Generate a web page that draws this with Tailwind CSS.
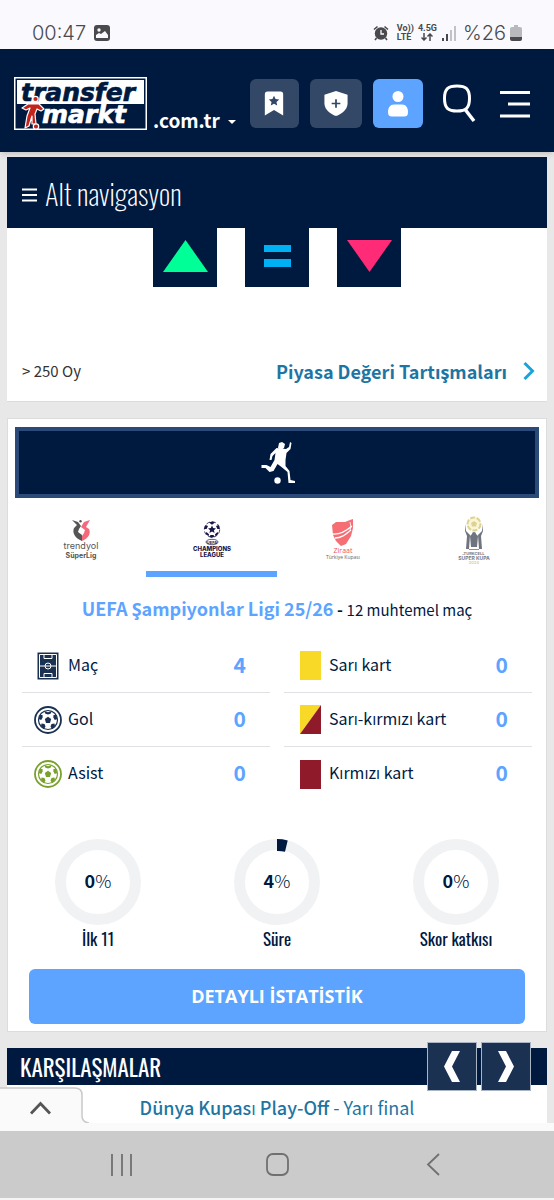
<!DOCTYPE html>
<html lang="tr">

<head>
  <meta charset="UTF-8" />
  <meta name="viewport" content="width=device-width, initial-scale=1.0" />
  <title>Transfermarkt</title>
  <script src="https://cdn.jsdelivr.net/npm/@tailwindcss/browser@4"></script>
</head>

<body class="bg-[#e8e8e8] min-h-screen flex flex-col text-[#00193f] font-['Noto_Sans_CJK_SC','Open_Sans',sans-serif]">

  <!-- Phone status bar -->
  <div class="bg-[#f9f9fe] h-[49px] pl-8 pr-8 pt-4 flex items-center justify-between text-[#4a4a4c] font-['Roboto',sans-serif]">
    <div class="flex items-center gap-2">
      <span class="text-xl leading-6 font-['Inter',sans-serif] font-light">00:47</span>
      <svg class="w-4 h-4" viewBox="0 0 16 16">
        <rect width="16" height="16" rx="3" fill="#4a4a4c" />
        <circle cx="5" cy="5" r="1.7" fill="#f9f9fe" />
        <path d="M2 13v-3l3-2 2 1 4-3 3 4v3z" fill="#f9f9fe" />
      </svg>
    </div>
    <div class="flex items-center">
      <svg class="w-4 h-4 mr-2" viewBox="0 0 16 16" fill="none" stroke="#4a4a4c">
        <circle cx="8" cy="8.500" r="6.200" fill="#4a4a4c" stroke="none" />
        <path d="M1 4.500L4.500 1.500M15 4.500L11.500 1.500M3.500 13L2 15M12.500 13L14 15" stroke-width="1.600" />
        <path d="M8 5v4h3" stroke="#f9f9fe" stroke-width="1.300" />
      </svg>
      <span class="text-[9px] leading-[9px] font-bold mr-1">Vo))<br>LTE</span>
      <span class="text-[9px] leading-[9px] font-bold mr-1 flex flex-col items-center">4.5G
        <svg class="w-3 h-2" viewBox="0 0 12 8" fill="none" stroke="#4a4a4c" stroke-width="1.500">
          <path d="M3 0v7M.5 4.500L3 7l2.500-2.500M9 8V1M6.500 3.500L9 1l2.500 2.500" />
        </svg>
      </span>
      <svg class="w-4 h-4 mr-1.5" viewBox="0 0 16 16">
        <path d="M1 13h2v3H1zM5 9h2v7H5z" fill="#4a4a4c" />
        <path d="M9 5h2v11H9zM13 1h2v15h-2z" fill="#c2c2c5" />
      </svg>
      <span class="text-xl leading-6 font-['Inter',sans-serif] font-light">%26</span>
      <svg class="w-3 h-4 ml-1" viewBox="0 0 12 16">
        <path d="M4 0h4v2h2a2 2 0 0 1 2 2v8H0V4a2 2 0 0 1 2-2h2z" fill="#b9b9bd" />
        <path d="M0 12h12v2a2 2 0 0 1-2 2H2a2 2 0 0 1-2-2z" fill="#4a4a4c" />
      </svg>
    </div>
  </div>

  <!-- Header -->
  <header class="relative bg-[#00193f] h-[103px] pl-3.5 pr-6 pt-1.5 flex items-center shadow-md">
    <a href="/" aria-label="transfermarkt" class="shrink-0">
      <svg class="w-[133px] h-[53px]" viewBox="0 0 133 53">
        <rect width="133" height="53" fill="#fff" />
        <rect x="1.500" y="1.500" width="130" height="50" fill="#00193f" />
        <rect x="3" y="3" width="127" height="24" fill="#fff" />
        <g font-family="DejaVu Sans" font-weight="bold" font-style="italic" font-size="25" stroke-width=".7">
          <text x="7" y="24" fill="#00193f" stroke="#00193f">transfer</text>
          <text x="28" y="46" fill="#fff" stroke="#fff">markt</text>
        </g>
        <g fill="#c4231c" stroke="#fff" stroke-width="1.200" stroke-linejoin="round">
          <path d="M8 31l6-4h11l5 5-3 2-4-2-2 5 1 10h-4l0-8-3 10-4 2 2-12 3-8-4 2z" />
          <circle cx="21.500" cy="22" r="2.700" />
          <circle cx="22" cy="49.500" r="2.700" />
        </g>
      </svg>
    </a>
    <button type="button" class="flex items-center gap-2 ml-1.5 mt-8 text-white font-bold text-[19px] leading-6">.com.tr
      <svg class="w-2 h-1 mt-1" viewBox="0 0 8 4"><path d="M0 0h8L4 4z" fill="#fff" /></svg>
    </button>
    <div class="flex items-center gap-[11px] ml-3.5">
      <button type="button" aria-label="Takip listesi" class="w-[49px] h-[49px] rounded-md bg-[#334766] flex items-center justify-center">
        <svg class="w-[22px] h-[27px]" viewBox="0 0 24 28">
          <path d="M5 1h14a3 3 0 0 1 3 3v23l-10-6-10 6V4a3 3 0 0 1 3-3z" fill="#fff" />
          <path d="M12 5.500l1.700 3.600 4 .5-3 2.700.8 4-3.500-2-3.500 2 .8-4-3-2.700 4-.5z" fill="#334766" />
        </svg>
      </button>
      <button type="button" aria-label="Kulübüm" class="w-[52px] h-[49px] rounded-md bg-[#334766] flex items-center justify-center">
        <svg class="w-6 h-[27px]" viewBox="0 0 24 28">
          <path d="M12 1l12 4v9c0 6-6 11-12 13C6 25 0 20 0 14V5z" fill="#fff" />
          <path d="M12 9.500v9M7.500 14h9" stroke="#334766" stroke-width="1.800" />
        </svg>
      </button>
      <button type="button" aria-label="Profil" class="w-[50px] h-[49px] rounded-md bg-[#5ca4ff] flex items-center justify-center">
        <svg class="w-5 h-7" viewBox="0 0 20 28">
          <circle cx="10" cy="6.500" r="5.500" fill="#fff" />
          <path d="M6 14.500h8c4 0 6 3.500 6 7.500 0 3-1 4.500-4 4.500H4c-3 0-4-1.500-4-4.500 0-4 2-7.500 6-7.500z" fill="#fff" />
        </svg>
      </button>
    </div>
    <button type="button" aria-label="Ara" class="ml-auto">
      <svg class="w-[34px] h-10" viewBox="0 0 34 40" fill="none" stroke="#fff" stroke-width="3">
        <path d="M15 2c9 0 12.500 3 12.500 12.500s-3.500 12.500-12.500 12.500-12.500-3-12.500-12.500 3.500-12.500 12.500-12.500z" />
        <path d="M23.500 26l8.500 11" stroke-width="3.500" />
      </svg>
    </button>
    <button type="button" aria-label="Menü" class="ml-6">
      <svg class="w-[30px] h-7" viewBox="0 0 30 28" stroke="#fff" stroke-width="2.800">
        <path d="M0 2.500h30M8 14h22M0 26h30" />
      </svg>
    </button>
  </header>

  <main class="relative pl-[7px] pr-[7px] flex flex-col">

    <!-- Market value vote -->
    <section class="mt-[5px] bg-white border-b border-[#dcdcdc]">
      <button type="button" class="w-full h-[71px] bg-[#00193f] text-white pl-[15px] flex items-center gap-2 text-[29px] leading-10 font-['Oswald','Roboto_Condensed','Liberation_Sans_Narrow',sans-serif] font-extralight">
        <svg class="w-[15px] h-3.5 mt-1" viewBox="0 0 15 14" stroke="#fff" stroke-width="2"><path d="M0 1.500h15M0 7h15M0 12.500h15" /></svg>
        Alt navigasyon
      </button>
      <div class="flex justify-center gap-7">
        <button type="button" aria-label="Yükselir" class="w-16 h-[59px] bg-[#00193f] flex justify-center">
          <svg class="w-[45px] h-8 mt-3" viewBox="0 0 45 32"><path d="M22.500 0L45 32H0z" fill="#00ff96" /></svg>
        </button>
        <button type="button" aria-label="Aynı kalır" class="w-16 h-[59px] bg-[#00193f] flex justify-center">
          <svg class="w-[27px] h-[22px] mt-[17px]" viewBox="0 0 27 22"><path d="M0 0h27v7H0zM0 14h27v8H0z" fill="#00b0f5" /></svg>
        </button>
        <button type="button" aria-label="Düşer" class="w-16 h-[59px] bg-[#00193f] flex justify-center">
          <svg class="w-[45px] h-8 mt-3" viewBox="0 0 45 32"><path d="M0 0h45L22.500 32z" fill="#ff2b77" /></svg>
        </button>
      </div>
      <div class="mt-[70px] mb-4 pl-[15px] pr-3 flex justify-between items-center">
        <span class="text-[15px] leading-7 text-[#333]">&gt; 250 Oy</span>
        <a href="#" class="flex items-center gap-4 text-[18px] leading-7 font-bold text-[#1d75a3]">Piyasa Değeri Tartışmaları
          <svg class="w-3 h-5" viewBox="0 0 12 20" fill="none" stroke="#1ba3d9" stroke-width="3"><path d="M1.500 2l8 8-8 8" /></svg>
        </a>
      </div>
    </section>

    <!-- Season stats -->
    <section class="mt-4 bg-white border border-[#dcdcdc] pt-2 px-[7px] pb-[7px]">
      <div class="h-[71px] bg-[#00193f] border-4 border-[#2b4a7a] flex items-center justify-center">
        <svg class="w-9 h-11" viewBox="0 0 36 44" fill="#fff">
          <path d="M20 2l3-1 3 2-1 4-3 2-3-2z" />
          <path d="M27 8l3-2 1-5 1.500 1-1 6-4 4-1 7 0 6 4 5 1 9 5 1 0 2h-7l-1-11-6-5-4-3-4 7-4 1-4-4-4 0 0-3 5 0 4 2 4-7 1-7-3 3-1 4-2 0 1-6 6-6z" />
          <circle cx="18.500" cy="39.500" r="3.200" />
        </svg>
      </div>

      <div class="grid grid-cols-4 h-[79px]">
        <button type="button" class="flex flex-col items-center pt-[22px] border-b-[6px] border-transparent">
          <svg class="w-10 h-10" viewBox="0 0 40 40" text-anchor="middle">
            <path d="M11 0l6 2 3 4-2 3-1 3 4 3v6C14 18 11 13 13 8l3-3z" fill="#555" />
            <circle cx="19.500" cy="1.200" r="1.200" fill="#555" />
            <path d="M29 0l-6 2-3 5 4 3-1 3-2 3v5c7-3 9-8 7-12l-3-2z" fill="#f5697a" />
            <text x="20" y="29" font-family="Inter" font-size="9" fill="#555">trendyol</text>
            <text x="20" y="37.500" font-family="Inter" font-size="7" font-weight="bold" fill="#555">SüperLig</text>
          </svg>
        </button>
        <button type="button" class="flex flex-col items-center pt-[23px] border-b-[6px] border-[#5ca4ff]">
          <svg class="w-10 h-9" viewBox="0 0 40 36" fill="#1a1747" text-anchor="middle">
            <circle cx="20" cy="8.500" r="7.700" fill="none" stroke="#1a1747" stroke-width=".8" stroke-dasharray="4 2" />
            <path d="M20 4.500l1.200 2.600 2.800.3-2.100 1.800.7 2.700-2.600-1.400-2.600 1.400.7-2.700-2.100-1.800 2.800-.3z" />
            <path d="M20 .5l3 1-3 2.200-3-2.200zM26.500 4l1.500 4-2.600 0-1.400-3zM13.500 4l2.500 1-1.400 3-2.600 0zM14.500 11l2.500 2.300-.5 2-3-2.500zM25.500 11l-2.500 2.300.5 2 3-2.500zM18.500 14h3l1 1.800-2.500 1-2.500-1z" />
            <ellipse cx="20" cy="21" rx="6" ry="2.700" fill="none" stroke="#1a1747" stroke-width=".7" />
            <text x="20" y="22.500" font-size="4" font-family="Inter" font-weight="bold">UEFA</text>
            <text x="20" y="29.500" font-size="6" font-family="Inter" font-weight="800">CHAMPIONS</text>
            <text x="20" y="35.500" font-size="6" font-family="Inter" font-weight="800">LEAGUE</text>
          </svg>
        </button>
        <button type="button" class="flex flex-col items-center pt-[21px] border-b-[6px] border-transparent">
          <svg class="w-10 h-[41px]" viewBox="0 0 40 41" text-anchor="middle">
            <path d="M9 6l4-3 9 0 5-2 3-1 0 9-2 8-5 8-5 2-5-5-3-6z" fill="#f46e74" />
            <path d="M9 15c7 1 13-2 20-8M12 19c6 0 10-3 16-8" fill="none" stroke="#fff" stroke-width="1.300" />
            <path d="M27 3l1 5-1 3" fill="none" stroke="#fff" stroke-width=".8" />
            <text x="20" y="33.500" font-family="Open Sans" font-size="7" font-weight="500" fill="#f0555c">Ziraat</text>
            <text x="20" y="40" font-family="Open Sans" font-size="5" fill="#666">Türkiye Kupası</text>
          </svg>
        </button>
        <button type="button" class="flex flex-col items-center pt-[18px] border-b-[6px] border-transparent">
          <svg class="w-10 h-12" viewBox="0 0 40 48" text-anchor="middle">
            <circle cx="20" cy="8" r="6.500" fill="#fbf5d8" stroke="#ded293" stroke-width="2" stroke-dasharray="5 1.500" />
            <path d="M20 5l3 2-1 3.500h-4L17 7z" fill="#ded293" />
            <path d="M11 8l1 7 4 4-1 14-3 0 1-13-2-5zM29 8l-1 7-4 4 1 14 3 0-1-13 2-5z" fill="#6f747f" />
            <path d="M18 18a2 2 0 1 1 4 0l2 2-1 11h-6l-1-11z" fill="#6f747f" />
            <path d="M15 33.500h10" stroke="#8b8f98" />
            <text x="20" y="38.500" font-family="Inter" font-size="4" font-weight="bold" fill="#777a83">TURKCELL</text>
            <text x="20" y="43.500" font-family="Inter" font-size="5" font-weight="bold" fill="#777a83">SÜPER KUPA</text>
            <text x="20" y="47.800" font-family="Inter" font-size="4" font-weight="bold" fill="#ded293">2024</text>
          </svg>
        </button>
      </div>

      <h2 class="mt-[17px] text-center text-base leading-7">
        <a href="#" class="text-[18px] font-bold text-[#5ca4ff]">UEFA Şampiyonlar Ligi 25/26</a>
        <b>-</b> <span class="text-[15px]">12 muhtemel maç</span>
      </h2>

      <div class="mt-[15px] px-[7px] grid grid-cols-2 gap-x-3.5 text-base">
        <a href="#" class="h-[54px] pl-3 pr-6 flex items-center border-b border-[#dfe1e4]">
          <svg class="w-7 h-7" viewBox="0 0 28 28" fill="none" stroke="#fff">
            <rect x="4" y="1" width="20" height="26" fill="#1a3151" stroke="#1a3151" />
            <path d="M5.500 2.500h17v23h-17zM5.500 14h17M10 2.500v4h8v-4M10 25.500v-4h8v4" />
            <circle cx="14" cy="14" r="3" />
          </svg>
          <span class="ml-1.5 pb-1">Maç</span><b class="ml-auto pb-0.5 text-[21px] text-[#5ca4ff]">4</b>
        </a>
        <a href="#" class="h-[54px] pl-3.5 pr-6 flex items-center border-b border-[#dfe1e4]">
          <span class="w-[21px] h-[29px] ml-0.5 bg-[#f8d927]"></span>
          <span class="ml-2 pb-1">Sarı kart</span><b class="ml-auto pb-0.5 text-[21px] text-[#5ca4ff]">0</b>
        </a>
        <a href="#" class="h-[54px] pl-3 pr-6 flex items-center border-b border-[#dfe1e4]">
          <svg class="w-7 h-7 text-[#1a3151]" viewBox="0 0 28 28" fill="currentColor">
            <circle cx="14" cy="14" r="13" fill="none" stroke="currentColor" stroke-width="1.800" />
            <circle cx="14" cy="14" r="9.500" fill="none" stroke="currentColor" stroke-width="1.200" />
            <path d="M14 10.800l3.200 2.300-1.200 3.800h-4l-1.200-3.800zM10 5l4 1.200L18 5l-1.500 2.700L14 8.500l-2.500-.8zM4.500 13l1.500-4 2.500 0 .2 2.500-1.500 2.500zM23.500 13L22 9l-2.500 0-.2 2.500 1.500 2.500zM7 20l.5-2.500 3 .5 1 2.500-1.500 2.500zM21 20l-.5-2.500-3 .5-1 2.500 1.500 2.500z" />
          </svg>
          <span class="ml-1.5 pb-1">Gol</span><b class="ml-auto pb-0.5 text-[21px] text-[#5ca4ff]">0</b>
        </a>
        <a href="#" class="h-[54px] pl-3.5 pr-6 flex items-center border-b border-[#dfe1e4]">
          <svg class="w-[21px] h-[29px] ml-0.5" viewBox="0 0 21 29"><path d="M0 0h21L0 29z" fill="#f8d927" /><path d="M21 0v29H0z" fill="#8f1a29" /></svg>
          <span class="ml-2 pb-1">Sarı-kırmızı kart</span><b class="ml-auto pb-0.5 text-[21px] text-[#5ca4ff]">0</b>
        </a>
        <a href="#" class="h-[54px] pl-3 pr-6 flex items-center">
          <svg class="w-7 h-7 text-[#79a12c]" viewBox="0 0 28 28" fill="currentColor">
            <circle cx="14" cy="14" r="13" fill="none" stroke="currentColor" stroke-width="1.800" />
            <circle cx="14" cy="14" r="9.500" fill="none" stroke="currentColor" stroke-width="1.200" />
            <path d="M14 10.800l3.200 2.300-1.200 3.800h-4l-1.200-3.800zM10 5l4 1.200L18 5l-1.500 2.700L14 8.500l-2.500-.8zM4.500 13l1.500-4 2.500 0 .2 2.500-1.500 2.500zM23.500 13L22 9l-2.500 0-.2 2.500 1.500 2.500zM7 20l.5-2.500 3 .5 1 2.500-1.500 2.500zM21 20l-.5-2.500-3 .5-1 2.500 1.500 2.500z" />
          </svg>
          <span class="ml-1.5 pb-1">Asist</span><b class="ml-auto pb-0.5 text-[21px] text-[#5ca4ff]">0</b>
        </a>
        <a href="#" class="h-[54px] pl-3.5 pr-6 flex items-center">
          <span class="w-[21px] h-[29px] ml-0.5 bg-[#8f1a29]"></span>
          <span class="ml-2 pb-1">Kırmızı kart</span><b class="ml-auto pb-0.5 text-[21px] text-[#5ca4ff]">0</b>
        </a>
      </div>

      <div class="mt-[38px] px-[38px] flex justify-between font-['Oswald','Roboto_Condensed','Liberation_Sans_Narrow',sans-serif] text-[17px] leading-6">
        <div class="w-[90px] flex flex-col items-center">
          <svg class="w-[86px] h-[86px]" viewBox="0 0 86 86">
            <circle cx="43" cy="43" r="37.500" fill="none" stroke="#f1f2f4" stroke-width="11" />
            <text x="43" y="49" text-anchor="middle" font-family="Noto Sans CJK SC" font-size="18" fill="#00193f"><tspan font-weight="bold">0</tspan><tspan font-weight="300">%</tspan></text>
          </svg>
          <span class="mt-0.5">İlk 11</span>
        </div>
        <div class="w-[90px] flex flex-col items-center">
          <svg class="w-[86px] h-[86px]" viewBox="0 0 86 86">
            <circle cx="43" cy="43" r="37.500" fill="none" stroke="#f1f2f4" stroke-width="11" />
            <path d="M43 0a43 43 0 0 1 10.700 1.400l-2.700 11.400A32 32 0 0 0 43 12z" fill="#00193f" />
            <text x="43" y="49" text-anchor="middle" font-family="Noto Sans CJK SC" font-size="18" fill="#00193f"><tspan font-weight="bold">4</tspan><tspan font-weight="300">%</tspan></text>
          </svg>
          <span class="mt-0.5">Süre</span>
        </div>
        <div class="w-[90px] flex flex-col items-center">
          <svg class="w-[86px] h-[86px]" viewBox="0 0 86 86">
            <circle cx="43" cy="43" r="37.500" fill="none" stroke="#f1f2f4" stroke-width="11" />
            <text x="43" y="49" text-anchor="middle" font-family="Noto Sans CJK SC" font-size="18" fill="#00193f"><tspan font-weight="bold">0</tspan><tspan font-weight="300">%</tspan></text>
          </svg>
          <span class="mt-0.5 whitespace-nowrap">Skor katkısı</span>
        </div>
      </div>

      <div class="mt-[18px] px-3.5">
        <a href="#" class="h-[55px] rounded-md bg-[#5ca4ff] text-white font-bold text-[18px] font-['Open_Sans',sans-serif] flex items-center justify-center">DETAYLI İSTATİSTİK</a>
      </div>
    </section>

    <!-- Fixtures -->
    <section class="mt-4 bg-white h-[75px]">
      <div class="h-[37px] bg-[#00193f] pl-[13px] pr-4 flex items-center justify-between">
        <h2 class="text-white text-[23px] leading-9 font-['Oswald','Roboto_Condensed','Liberation_Sans_Narrow',sans-serif]">KARŞILAŞMALAR</h2>
        <div class="flex gap-1">
          <button type="button" aria-label="Önceki" class="relative w-[50px] h-[49px] bg-[#1a3151] border border-[#a9b4c4] flex items-center justify-center">
            <svg class="w-4 h-[31px]" viewBox="0 0 16 31"><path d="M8 0h8L8 15.500 16 31H8L0 15.500z" fill="#fff" /></svg>
          </button>
          <button type="button" aria-label="Sonraki" class="relative w-[50px] h-[49px] bg-[#1a3151] border border-[#a9b4c4] flex items-center justify-center">
            <svg class="w-4 h-[31px]" viewBox="0 0 16 31"><path d="M8 0H0l8 15.500L0 31h8l8-15.500z" fill="#fff" /></svg>
          </button>
        </div>
      </div>
      <p class="mt-2 text-center text-[18px] leading-7"><a href="#" class="text-[#1d75a3]"><span class="font-medium">Dünya Kupası Play-Off</span> - Yarı final</a></p>
    </section>

    <!-- Pull-up tab of the sticky ad -->
    <button type="button" aria-label="Aç" class="absolute left-0 bottom-0 w-[89px] h-9">
      <svg class="w-full h-full" viewBox="0 0 89 36" fill="none">
        <path d="M0 1h75q7 0 7 7v21q0 6 7 7H0z" fill="#fafafa" />
        <path d="M0 1h75q7 0 7 7v21q0 6 7 7" stroke="#c9c9c9" stroke-width="1.500" />
        <path d="M31 26.500l9.500-10 9.500 10" stroke="#555" stroke-width="2.800" />
      </svg>
    </button>
  </main>

  <div class="relative h-2 bg-[#fafafa]"></div>

  <!-- Android navigation -->
  <nav class="h-[67px] bg-[#cbcbcb] grid grid-cols-[1fr_68px_1fr] items-center">
    <button type="button" aria-label="Son uygulamalar" class="flex justify-center">
      <svg class="w-[22px] h-[22px]" viewBox="0 0 22 22" stroke="#707070" stroke-width="1.800"><path d="M1 0v22M11 0v22M20 0v22" /></svg>
    </button>
    <button type="button" aria-label="Ana ekran" class="flex justify-center">
      <svg class="w-[23px] h-[23px]" viewBox="0 0 23 23" fill="none" stroke="#707070" stroke-width="1.800"><rect x="1" y="1" width="21" height="21" rx="6" /></svg>
    </button>
    <button type="button" aria-label="Geri" class="flex justify-center">
      <svg class="w-3.5 h-[23px]" viewBox="0 0 14 23" fill="none" stroke="#707070" stroke-width="1.800"><path d="M13 1L2 11.500 13 22" /></svg>
    </button>
  </nav>
  <div class="grow bg-[#f5f5f5]"></div>
</body>

</html>
